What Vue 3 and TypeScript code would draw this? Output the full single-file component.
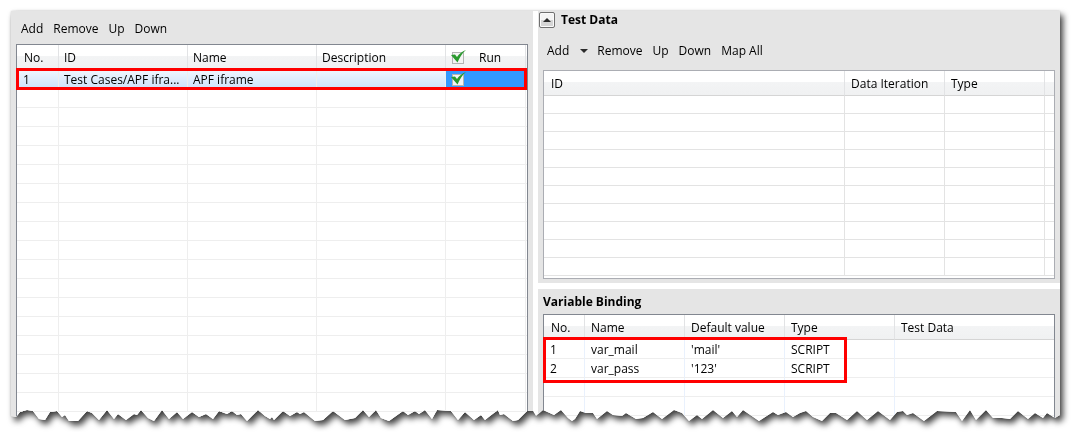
<script setup lang="ts">
import { ref } from 'vue'

interface TestCase {
  no: number
  id: string
  name: string
  description: string
  run: boolean
}

interface Variable {
  no: number
  name: string
  value: string
  type: string
}

const cases = ref<TestCase[]>([
  { no: 1, id: 'Test Cases/APF ifra...', name: 'APF iframe', description: '', run: true },
])
const runAll = ref(true)

const variables: Variable[] = [
  { no: 1, name: 'var_mail', value: "'mail'", type: 'SCRIPT' },
  { no: 2, name: 'var_pass', value: "'123'", type: 'SCRIPT' },
]

const caseActions = ['Add', 'Remove', 'Up', 'Down']
const dataActions = ['Remove', 'Up', 'Down', 'Map All']

// Torn bottom edge: [distance from the left, height above the lowest tooth]
const sheetWidth = 1049
const teeth: [number, number][] = [
  [0, 5], [5, 4], [9, 9], [16, 11], [22, 10], [28, 2], [34, 1], [39, 9], [46, 10], [51, 4], [54, 6], [58, 0],
  [67, 0], [76, 10], [81, 8], [88, 1], [96, 11], [103, 2], [107, 7], [115, 1], [123, 7], [126, 6], [130, 11],
  [137, 3], [143, 0], [151, 11], [158, 2], [166, 9], [172, 2], [181, 9], [188, 4], [195, 7], [202, 2], [208, 10],
  [216, 7], [221, 10], [226, 6], [230, 7], [236, 0], [247, 11], [254, 5], [259, 2], [261, 4], [263, 1], [272, 10],
  [279, 5], [286, 9], [289, 7], [293, 9], [304, 0], [312, 1], [322, 10], [334, 1], [344, 3], [352, 11], [358, 4],
  [365, 11], [370, 3], [378, 0], [392, 10], [397, 6], [404, 10], [408, 7], [414, 11], [421, 2], [426, 11],
  [440, 10], [447, 1], [454, 9], [463, 1], [470, 6], [474, 1], [479, 5], [487, 11], [489, 6], [493, 7], [502, 0],
  [507, 1], [516, 10], [522, 10], [525, 5], [532, 11], [543, 6], [550, 11], [557, 3], [561, 0], [564, 2],
  [569, 10], [575, 8], [582, 8], [586, 2], [596, 10], [602, 6], [611, 5], [615, 8], [625, 2], [632, 3], [642, 9],
  [651, 2], [663, 11], [671, 8], [678, 0], [686, 6], [691, 2], [702, 11], [712, 3], [721, 10], [726, 4],
  [732, 11], [748, 0], [762, 9], [767, 6], [775, 9], [782, 4], [789, 8], [795, 10], [802, 4], [811, 0], [819, 8],
  [825, 8], [836, 1], [846, 10], [856, 1], [867, 10], [879, 1], [886, 9], [892, 10], [896, 6], [902, 8], [913, 0],
  [926, 10], [945, 9], [951, 0], [959, 11], [965, 1], [975, 11], [982, 3], [991, 3], [999, 2], [1007, 10],
  [1017, 2], [1024, 8], [1032, 3], [1036, 8], [1044, 3], [1049, 6],
]
const tornEdge =
  'polygon(0 0, ' +
  teeth.map(([x, y]) => `${((x / sheetWidth) * 100).toFixed(3)}% calc(100% - ${y}px)`).join(', ') +
  ', 100% 0)'
</script>

<template>
  <main class="page">
    <div class="shadow">
      <div class="sheet" :style="{ clipPath: tornEdge }">
        <section class="panel cases" aria-label="Test cases">
          <div class="toolbar">
            <button v-for="action in caseActions" :key="action" type="button">{{ action }}</button>
          </div>
          <div class="grid-box">
            <table>
              <colgroup>
                <col class="c-no" /><col class="c-text" /><col class="c-text" /><col /><col class="c-run" /><col class="c-end" />
              </colgroup>
              <thead>
                <tr>
                  <th>No.</th>
                  <th>ID</th>
                  <th>Name</th>
                  <th>Description</th>
                  <th>
                    <label class="tick">
                      <input v-model="runAll" type="checkbox" />
                      <svg v-if="runAll" viewBox="0 0 16 14" aria-hidden="true"><path d="M0 5 4 4.500 6 7C8 4 11 1.500 15 0 11 3 8.500 8 6.500 12.500Z" /></svg>
                      <span>Run</span>
                    </label>
                  </th>
                  <th></th>
                </tr>
              </thead>
              <tbody>
                <tr v-for="item in cases" :key="item.no" class="selected">
                  <td>{{ item.no }}</td>
                  <td>{{ item.id }}</td>
                  <td>{{ item.name }}</td>
                  <td>{{ item.description }}</td>
                  <td class="active">
                    <label class="tick">
                      <input v-model="item.run" type="checkbox" aria-label="Run test case" />
                      <svg v-if="item.run" viewBox="0 0 16 14" aria-hidden="true"><path d="M0 5 4 4.500 6 7C8 4 11 1.500 15 0 11 3 8.500 8 6.500 12.500Z" /></svg>
                    </label>
                  </td>
                  <td></td>
                </tr>
                <tr v-for="n in 17" :key="'blank' + n"><td v-for="c in 6" :key="c"></td></tr>
              </tbody>
            </table>
            <div class="mark mark-case"></div>
          </div>
        </section>

        <div class="side">
          <section class="panel data">
            <header class="title">
              <button type="button" class="fold" aria-label="Collapse test data">
                <svg viewBox="0 0 8 4" aria-hidden="true"><path d="M4 0 8 4H0Z" /></svg>
              </button>
              <h2>Test Data</h2>
            </header>
            <div class="toolbar">
              <button type="button">Add</button>
              <button type="button" class="more" aria-label="More add options">
                <svg viewBox="0 0 8 4" aria-hidden="true"><path d="M0 0H8L4 4Z" /></svg>
              </button>
              <button v-for="action in dataActions" :key="action" type="button">{{ action }}</button>
            </div>
            <div class="grid-box soft">
              <table>
                <colgroup><col /><col class="c-field" /><col class="c-field" /><col class="c-rest" /></colgroup>
                <thead>
                  <tr><th>ID</th><th>Data Iteration</th><th>Type</th><th></th></tr>
                </thead>
                <tbody>
                  <tr v-for="n in 10" :key="n"><td v-for="c in 4" :key="c"></td></tr>
                </tbody>
              </table>
            </div>
          </section>

          <section class="panel binding">
            <h2>Variable Binding</h2>
            <div class="grid-box">
              <table>
                <colgroup><col class="c-no" /><col class="c-field" /><col class="c-field" /><col class="c-type" /><col /></colgroup>
                <thead>
                  <tr><th>No.</th><th>Name</th><th>Default value</th><th>Type</th><th>Test Data</th></tr>
                </thead>
                <tbody>
                  <tr v-for="v in variables" :key="v.no">
                    <td>{{ v.no }}</td>
                    <td>{{ v.name }}</td>
                    <td>{{ v.value }}</td>
                    <td>{{ v.type }}</td>
                    <td></td>
                  </tr>
                  <tr v-for="n in 2" :key="'blank' + n"><td v-for="c in 5" :key="c"></td></tr>
                </tbody>
              </table>
              <div class="mark mark-vars"></div>
            </div>
          </section>
        </div>
      </div>
    </div>
  </main>
</template>

<style>
body {
  margin: 0;
  background: #fff;
}
</style>

<style scoped>
.page {
  padding: 11px;
  font: 12px/16px "Open Sans", "Noto Sans", sans-serif;
  color: #000;
}
.shadow {
  filter: drop-shadow(0 0 1px rgba(0, 0, 0, 0.15)) drop-shadow(3px 4px 3px rgba(0, 0, 0, 0.75));
}
.sheet {
  display: grid;
  grid-template-columns: 1fr 1fr;
  gap: 5px;
  background: #fff;
}
.side {
  display: flex;
  flex-direction: column;
  gap: 6px;
  min-width: 0;
}
.panel {
  display: flex;
  flex-direction: column;
  min-width: 0;
  padding: 0 5px;
  background: #e5e5e5;
}
.cases {
  padding-top: 10px;
}
.data {
  padding-bottom: 4px;
}
.binding {
  padding-top: 5px;
}
h2 {
  margin: 0;
  font-size: 12px;
  line-height: 16px;
  font-weight: 700;
}
.binding h2 {
  padding-bottom: 4px;
}
.title {
  display: flex;
  align-items: center;
  gap: 6px;
  margin-left: -4px;
  height: 18px;
}
.toolbar {
  display: flex;
  align-items: center;
  gap: 10px;
  padding: 0 5px 7px;
}
.data .toolbar {
  padding: 14px 4px 11px;
}
button {
  padding: 0;
  border: 0;
  background: none;
  font: inherit;
  color: inherit;
}
.toolbar button {
  flex: none;
}
.toolbar .more {
  display: flex;
  margin: 0 -1px 0 1px;
}
.more svg,
.fold svg {
  width: 8px;
  height: 4px;
  fill: #2b2b2b;
}
.fold {
  display: flex;
  align-items: center;
  justify-content: center;
  width: 16px;
  height: 16px;
  border: 1px solid #707070;
  border-radius: 2px;
  background: linear-gradient(#f4f4f4 50%, #d5d5d5 50%);
  box-shadow: inset 0 0 0 1px #fafafa;
}
.grid-box {
  position: relative;
  flex: 1;
  border: 1px solid #828790;
  border-bottom: 0;
  background: #fff;
}
.soft {
  border: 1px solid #abadb3;
  padding-bottom: 2px;
}
.binding .grid-box {
  padding-bottom: 5px;
}
table {
  width: 100%;
  table-layout: fixed;
  border-collapse: separate;
  border-spacing: 0;
}
.c-no { width: 42px; }
.binding .c-no { width: 41px; }
.c-text { width: 129px; }
.c-run { width: 80px; }
.c-end { width: 1px; }
.c-field { width: 100px; }
.c-type { width: 110px; }
.c-rest { width: 9px; }
th,
td {
  box-sizing: border-box;
  height: 19px;
  padding: 0 0 0 6px;
  border-right: 1px solid #eeeeee;
  border-bottom: 1px solid #eeeeee;
  line-height: 16px;
  text-align: left;
  font-weight: 400;
  white-space: nowrap;
  overflow: hidden;
}
th {
  height: 25px;
  padding-top: 2px;
  border-right-color: #e2e3e5;
  border-bottom-color: #d5d5d5;
  background: linear-gradient(#fff 45%, #f3f4f5 45%, #f0f1f2);
}
.cases th,
.cases td {
  padding-left: 5px;
}
.cases td:first-child {
  padding-left: 6px;
}
.cases th:first-child,
.soft th:first-child,
.binding th:first-child {
  padding-left: 7px;
}
.cases tr > :last-child,
.soft tr > :last-child {
  padding-left: 0;
  border-right: 0;
}
.binding tr > :last-child {
  border-right: 0;
}
.soft td {
  height: 18px;
  border-color: #e3e3e3;
}
.binding td {
  padding-top: 2px;
  border-right-color: #e9f1fd;
}
.selected td {
  border-bottom: 0;
  background: linear-gradient(#f0f6fe, #cce2fb);
}
.selected td.active {
  background: #3399ff;
  border-right-color: #3399ff;
}
.tick {
  position: relative;
  display: flex;
  align-items: center;
  gap: 15px;
  padding-left: 1px;
}
.tick input {
  appearance: none;
  box-sizing: border-box;
  width: 12px;
  height: 12px;
  margin: 0;
  border: 1px solid #b4b4b4;
  background: #f4f4f4;
}
.tick svg {
  position: absolute;
  left: 0;
  top: 0;
  width: 16px;
  height: 14px;
  fill: #2a9a2e;
  pointer-events: none;
}
.selected .tick svg {
  top: -2px;
}
.mark {
  position: absolute;
  border: 3px solid #f00;
  box-sizing: border-box;
  pointer-events: none;
}
.mark-case {
  left: -1px;
  right: 0;
  top: 23px;
  height: 22px;
}
.mark-vars {
  left: -1px;
  top: 22px;
  width: 304px;
  height: 46px;
}
</style>
